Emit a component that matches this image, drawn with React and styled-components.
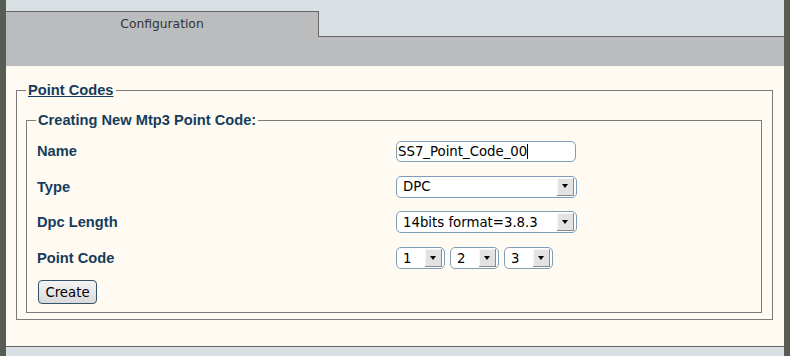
import React from 'react';
import styled, { createGlobalStyle } from 'styled-components';

const Global = createGlobalStyle`
  html, body { margin: 0; padding: 0; background: #d9e0e4; }
  body { font-family: "DejaVu Sans", sans-serif; }
`;

const Frame = styled.div`
  width: 790px;
  height: 356px;
  box-sizing: border-box;
  border-left: 6px solid #575c55;
  border-right: 6px solid #575c55;
  background: #d9e0e4;
  display: flex;
  flex-direction: column;
  overflow: hidden;
`;

const Header = styled.div`
  display: flex;
  height: 37px;
  flex: none;
`;

const Tab = styled.div`
  box-sizing: border-box;
  width: 313px;
  height: 26px;
  margin-top: 11px;
  border-top: 1px solid #666;
  border-right: 1px solid #666;
  background: #bbbcbe;
  color: #333;
  font-size: 12.3px;
  line-height: 15px;
  padding-top: 5px;
  text-align: center;
`;

const TabFiller = styled.div`
  flex: 1;
  box-sizing: border-box;
  border-bottom: 1px solid #666;
`;

const Band = styled.div`
  height: 29px;
  flex: none;
  background: #bbbcbe;
`;

const Main = styled.div`
  height: 280px;
  flex: none;
  box-sizing: border-box;
  background: #fffbf2;
  padding: 16px 11px 0 10px;
`;

const Footer = styled.div`
  flex: 1;
  border-top: 1px solid #666;
  background: #d9e0e4;
`;

const Fieldset = styled.fieldset`
  margin: 0;
  border: 1px solid #7b7b7b;
  padding: ${p => p.$pad};
  min-width: 0;
`;

const Legend = styled.legend`
  padding: 0 2px;
  font-family: "Liberation Sans", Arial, sans-serif;
  font-weight: bold;
  font-size: 11pt;
  color: #163b5c;
  text-decoration: ${p => (p.$underline ? 'underline' : 'none')};
`;

const FormGrid = styled.div`
  display: grid;
  grid-template-columns: 360px 1fr;
  grid-template-rows: 36px 35px 36px 36px auto;
  align-items: center;
`;

const Label = styled.div`
  padding-left: 1px;
  font-family: "Liberation Sans", Arial, sans-serif;
  font-weight: bold;
  font-size: 11pt;
  color: #163b5c;
`;

const Control = styled.div`
  display: flex;
  gap: 5px;
  align-items: center;
`;

const TextField = styled.div`
  box-sizing: border-box;
  width: 180px;
  height: 21px;
  border: 1px solid #7f9db9;
  border-radius: 5px;
  background: #fff;
  padding: 0 1px;
  font-size: 13.3px;
  line-height: 19px;
  color: #000;
  display: flex;
  align-items: center;
`;

const Caret = styled.span`
  display: inline-block;
  width: 1px;
  height: 15px;
  background: #000;
`;

const SelectBox = styled.div`
  box-sizing: border-box;
  width: ${p => p.$w}px;
  height: 22px;
  border: 1px solid #7f9db9;
  border-radius: 5px;
  background: #fff;
  display: flex;
  align-items: center;
  font-size: 13.3px;
  color: #000;
`;

const SelectValue = styled.span`
  flex: 1;
  padding-left: 6px;
  white-space: nowrap;
  overflow: hidden;
`;

const ArrowButton = styled.span`
  box-sizing: border-box;
  width: 17px;
  height: 18px;
  margin-right: 2px;
  background: #e2e2e2;
  border-right: 1px solid #8a8a8a;
  border-bottom: 1px solid #8a8a8a;
  box-shadow: inset 1px 1px 0 #f6f6f6;
  display: flex;
  align-items: center;
  justify-content: center;
  &::after {
    content: '';
    width: 0;
    height: 0;
    border-left: 3.5px solid transparent;
    border-right: 3.5px solid transparent;
    border-top: 4px solid #000;
  }
`;

const ButtonRow = styled.div`
  grid-column: 1 / -1;
  padding-left: 2px;
  align-self: start;
  padding-top: 4px;
`;

const Button = styled.button`
  box-sizing: border-box;
  width: 59px;
  height: 24px;
  border: 1px solid #34516a;
  border-radius: 4px;
  background: linear-gradient(#f4f4f4, #d9d9d9);
  font-family: "DejaVu Sans", sans-serif;
  font-size: 13.3px;
  color: #000;
  padding: 0;
`;

const Select = ({ value, w }) => (
  <SelectBox $w={w}>
    <SelectValue>{value}</SelectValue>
    <ArrowButton />
  </SelectBox>
);

export default function App() {
  return (
    <>
      <Global />
      <Frame>
        <Header>
          <Tab>Configuration</Tab>
          <TabFiller />
        </Header>
        <Band />
        <Main>
          <Fieldset $pad="14px 10px 6px 9px">
            <Legend $underline>Point Codes</Legend>
            <Fieldset $pad="5px 9px 8px 9px">
              <Legend>Creating New Mtp3 Point Code:</Legend>
              <FormGrid>
                <Label>Name</Label>
                <Control>
                  <TextField>SS7_Point_Code_00<Caret /></TextField>
                </Control>
                <Label>Type</Label>
                <Control>
                  <Select value="DPC" w={181} />
                </Control>
                <Label>Dpc Length</Label>
                <Control>
                  <Select value="14bits format=3.8.3" w={181} />
                </Control>
                <Label>Point Code</Label>
                <Control>
                  <Select value="1" w={49} />
                  <Select value="2" w={49} />
                  <Select value="3" w={49} />
                </Control>
                <ButtonRow>
                  <Button>Create</Button>
                </ButtonRow>
              </FormGrid>
            </Fieldset>
          </Fieldset>
        </Main>
        <Footer />
      </Frame>
    </>
  );
}
